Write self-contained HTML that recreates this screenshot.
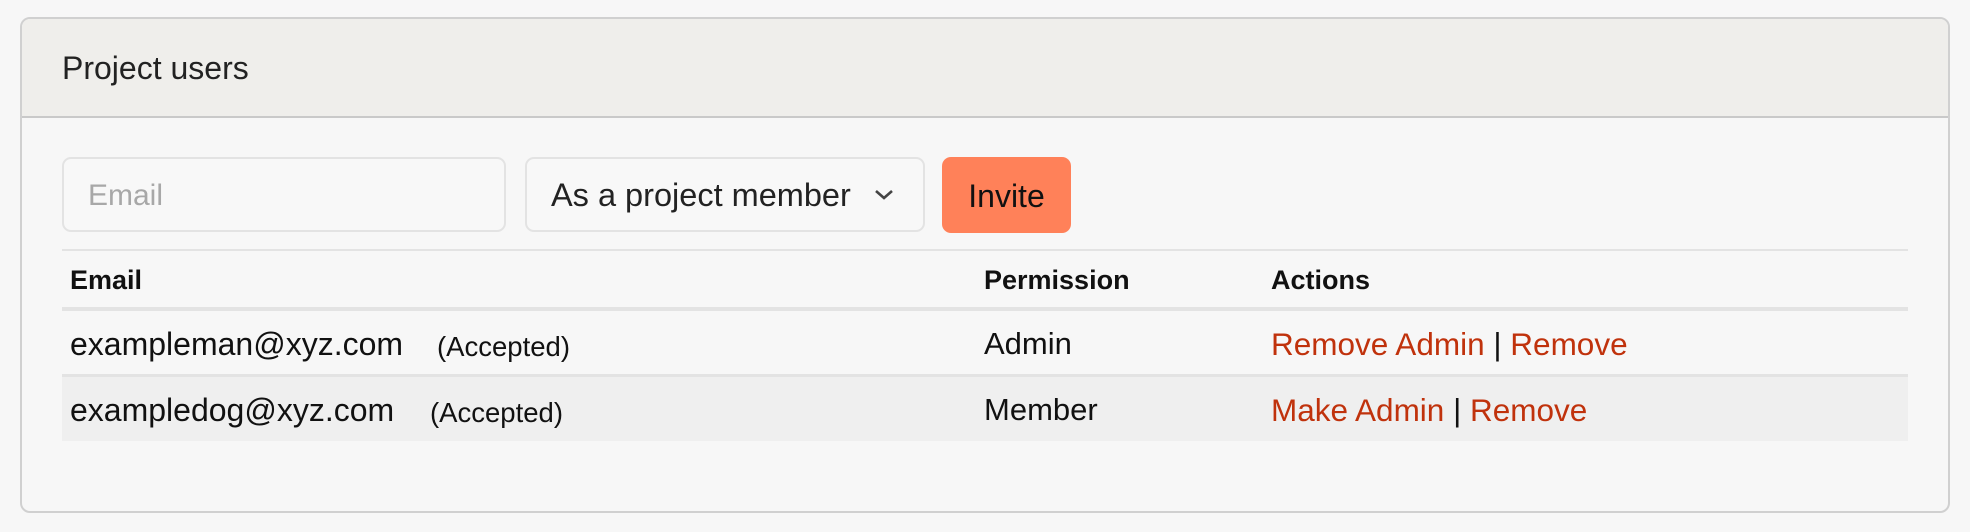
<!DOCTYPE html>
<html><head><style>
*{box-sizing:border-box;margin:0;padding:0}
body{width:1970px;height:532px;background:#f7f7f7;font-family:"Liberation Sans",sans-serif;position:relative;overflow:hidden;color:#111}
.card{position:absolute;left:20px;top:17px;width:1930px;height:496px;border:2px solid #d0d0d0;border-radius:10px;background:#f7f7f7;overflow:hidden}
.hd{position:absolute;left:0;top:0;right:0;height:99px;background:#efeeeb;border-bottom:2px solid #c9c9c9}
.hd span{position:absolute;left:40px;top:31px;font-size:32px;color:#222}
.in{position:absolute;top:157px;height:75px;border:2px solid #e3e3e3;border-radius:9px;background:#f8f8f8;font-size:32px;line-height:73px;padding-left:24px}
.btn{position:absolute;left:942px;top:157px;width:129px;height:76px;background:#ff8159;border-radius:9px;font-size:32px;line-height:78px;text-align:center;color:#111}
.line{position:absolute;left:62px;width:1846px;background:#e3e3e3}
.tx{position:absolute;white-space:nowrap}
.r{color:#c0320c}
</style></head><body>
<div class="card"><div class="hd"><span>Project users</span></div></div>
<div class="in" style="left:62px;width:444px;color:#a8a8a8;font-size:30px">Email</div>
<div class="in" style="left:525px;width:400px;color:#222;font-size:32.5px">As a project member
<svg style="position:absolute;left:346px;top:29px" width="22" height="14" viewBox="0 0 22 14"><path d="M3 3l8 7 8-7" fill="none" stroke="#444" stroke-width="2.6"/></svg></div>
<div class="btn">Invite</div>
<div class="line" style="top:249px;height:2px"></div>
<div class="line" style="top:307px;height:4px"></div>
<div class="line" style="top:374px;height:3px"></div>
<div class="line" style="top:377px;height:64px;background:#efefef"></div>
<div class="tx" style="left:70px;top:265px;font-size:27px;font-weight:bold">Email</div>
<div class="tx" style="left:984px;top:265px;font-size:27px;font-weight:bold">Permission</div>
<div class="tx" style="left:1271px;top:265px;font-size:27px;font-weight:bold">Actions</div>
<div class="tx" style="left:70px;top:326px;font-size:32px">exampleman@xyz.com</div>
<div class="tx" style="left:437px;top:331px;font-size:27.5px">(Accepted)</div>
<div class="tx" style="left:984px;top:326px;font-size:31px">Admin</div>
<div class="tx" style="left:1271px;top:326px;font-size:31.5px"><span class="r">Remove Admin</span> | <span class="r">Remove</span></div>
<div class="tx" style="left:70px;top:392px;font-size:32px">exampledog@xyz.com</div>
<div class="tx" style="left:430px;top:397px;font-size:27.5px">(Accepted)</div>
<div class="tx" style="left:984px;top:392px;font-size:31px">Member</div>
<div class="tx" style="left:1271px;top:392px;font-size:31.5px"><span class="r">Make Admin</span> | <span class="r">Remove</span></div>
</body></html>
